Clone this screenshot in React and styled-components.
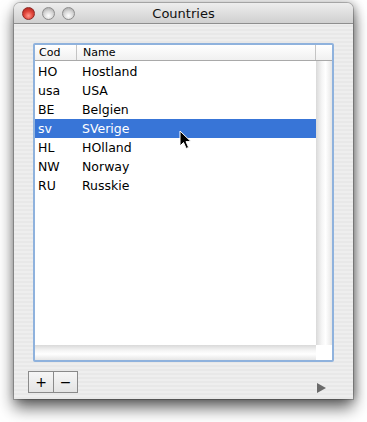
import React from 'react';
import styled, { createGlobalStyle } from 'styled-components';

const Global = createGlobalStyle`
  html, body {
    margin: 0;
    background: #fff;
    font-family: "DejaVu Sans", "Liberation Sans", sans-serif;
  }
`;

const Page = styled.div`
  box-sizing: border-box;
  min-height: 422px;
  padding: 3px 14px 23px;
`;

const Window = styled.div`
  position: relative;
  width: 339px;
  height: 396px;
  display: flex;
  flex-direction: column;
  border-radius: 6px 6px 0 0;
  background-color: #ececec;
  background-image: repeating-linear-gradient(
    to bottom,
    #eeeeee 0,
    #eeeeee 2px,
    #e8e8e8 2px,
    #e8e8e8 4px
  );
  box-shadow: 0 9px 16px rgba(0, 0, 0, 0.6), 2px 0 10px rgba(0, 0, 0, 0.3),
    0 0 0 1px rgba(0, 0, 0, 0.2);
`;

const TitleBar = styled.div`
  height: 20px;
  display: flex;
  align-items: center;
  padding-left: 8px;
  position: relative;
  border-bottom: 1px solid #8e8e8e;
  border-radius: 6px 6px 0 0;
  background: linear-gradient(to bottom, #eeeeee, #d0d0d0);
`;

const Light = styled.span`
  width: 13px;
  height: 13px;
  border-radius: 50%;
  margin-right: 7px;
  box-sizing: border-box;
  border: 1px solid ${p => (p.red ? '#8e2a26' : '#8d8d8d')};
  background: ${p =>
    p.red
      ? 'radial-gradient(circle at 50% 70%, #ff9a8e 0%, #e2463b 45%, #a31d18 100%)'
      : 'radial-gradient(circle at 50% 70%, #ffffff 0%, #d6d6d6 50%, #9b9b9b 100%)'};
`;

const Title = styled.div`
  position: absolute;
  left: 0;
  right: 0;
  text-align: center;
  font-size: 13px;
  color: #111;
  pointer-events: none;
`;

const Content = styled.div`
  padding: 19px 19px 0;
`;

const Focus = styled.div`
  width: 301px;
  height: 319px;
  box-sizing: border-box;
  border: 2px solid #8fb2dd;
  border-radius: 2px;
  display: grid;
  grid-template-columns: 281px 16px;
  grid-template-rows: 16px 1fr 15px;
  background: #fff;
`;

const Header = styled.div`
  grid-column: 1 / 3;
  display: grid;
  grid-template-columns: 42px 239px 16px;
  border-bottom: 1px solid #a9a9a9;
  background: linear-gradient(to bottom, #ffffff, #f0f0f0);
  font-size: 11px;
  color: #000;
`;

const HeadCell = styled.div`
  padding-left: ${p => (p.first ? 4 : 6)}px;
  line-height: 15px;
  border-right: ${p => (p.last ? 'none' : '1px solid #c4c4c4')};
`;

const Rows = styled.div`
  position: relative;
  padding-top: 1px;
  font-size: 12.5px;
`;

const Row = styled.div`
  height: 19px;
  display: grid;
  grid-template-columns: 42px 1fr;
  align-items: center;
  background: ${p => (p.selected ? '#3875d7' : 'transparent')};
  color: ${p => (p.selected ? '#fff' : '#000')};
`;

const Cell = styled.div`
  padding-left: ${p => (p.first ? 3 : 5)}px;
  white-space: nowrap;
`;

const VTrack = styled.div`
  background: linear-gradient(to right, #d9d9d9, #f4f4f4 35%, #ffffff 60%, #e6e6e6);
`;

const HTrack = styled.div`
  background: linear-gradient(to bottom, #d9d9d9, #f4f4f4 35%, #ffffff 60%, #e6e6e6);
`;

const Corner = styled.div`
  background: #fff;
`;

const Cursor = styled.svg`
  position: absolute;
  left: 144px;
  top: 69px;
`;

const Footer = styled.div`
  display: flex;
  align-items: center;
  justify-content: space-between;
  padding: 9px 27px 0 14px;
`;

const Buttons = styled.div`
  display: flex;
  border: 1px solid #8a8a8a;
`;

const SquareButton = styled.button`
  width: 24px;
  height: 20px;
  padding: 0;
  border: none;
  border-left: ${p => (p.divided ? '1px solid #8a8a8a' : 'none')};
  background: linear-gradient(to bottom, #f6f6f6, #e4e4e4);
  font-family: "DejaVu Sans", sans-serif;
  font-size: 14px;
  line-height: 20px;
  color: #000;
`;

const Triangle = styled.span`
  width: 0;
  height: 0;
  margin-top: 12px;
  border-top: 5px solid transparent;
  border-bottom: 5px solid transparent;
  border-left: 9px solid #6a6a6a;
`;

const countries = [
  { code: 'HO', name: 'Hostland' },
  { code: 'usa', name: 'USA' },
  { code: 'BE', name: 'Belgien' },
  { code: 'sv', name: 'SVerige', selected: true },
  { code: 'HL', name: 'HOlland' },
  { code: 'NW', name: 'Norway' },
  { code: 'RU', name: 'Russkie' },
];

const App = () => (
  <Page>
    <Global />
    <Window>
      <TitleBar>
        <Light red />
        <Light />
        <Light />
        <Title>Countries</Title>
      </TitleBar>
      <Content>
        <Focus>
          <Header>
            <HeadCell first>Cod</HeadCell>
            <HeadCell>Name</HeadCell>
            <HeadCell last />
          </Header>
          <Rows>
            {countries.map(c => (
              <Row key={c.code} selected={c.selected}>
                <Cell first>{c.code}</Cell>
                <Cell>{c.name}</Cell>
              </Row>
            ))}
            <Cursor width="13" height="20" viewBox="0 0 13 20">
              <path
                d="M1 1 L1 16 L4.5 12.5 L7.2 18.5 L9.6 17.4 L7 11.6 L12 11.6 Z"
                fill="#000"
                stroke="#fff"
                strokeWidth="1"
                strokeLinejoin="round"
              />
            </Cursor>
          </Rows>
          <VTrack />
          <HTrack />
          <Corner />
        </Focus>
      </Content>
      <Footer>
        <Buttons>
          <SquareButton>+</SquareButton>
          <SquareButton divided>−</SquareButton>
        </Buttons>
        <Triangle />
      </Footer>
    </Window>
  </Page>
);

export default App;
